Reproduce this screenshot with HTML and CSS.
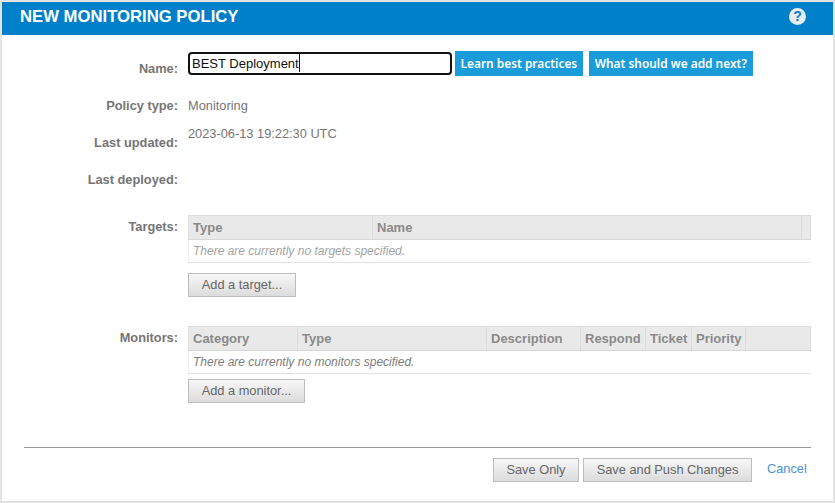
FILE: index.html
```html
<!DOCTYPE html>
<html lang="en">
<head>
<meta charset="utf-8">
<title>New Monitoring Policy</title>
<link rel="stylesheet" href="styles.css">
</head>
<body>
<div class="dialog">
  <header class="titlebar">
    <h1 class="title">NEW MONITORING POLICY</h1>
    <span class="help">?</span>
  </header>
  <main class="form">
    <div class="row row-name">
      <div class="label">Name:</div>
      <div class="value name-controls">
        <div class="textbox"><span class="typed">BEST Deployment</span></div>
        <a class="cta cta-first">Learn best practices</a>
        <a class="cta">What should we add next?</a>
      </div>
    </div>
    <div class="row row-type">
      <div class="label">Policy type:</div>
      <div class="value">Monitoring</div>
    </div>
    <div class="row row-updated">
      <div class="label">Last updated:</div>
      <div class="value">2023-06-13 19:22:30 UTC</div>
    </div>
    <div class="row row-deployed">
      <div class="label">Last deployed:</div>
      <div class="value"></div>
    </div>
    <div class="row row-targets">
      <div class="label">Targets:</div>
      <div class="value">
        <table class="grid">
          <colgroup><col class="t1"><col><col class="tail"></colgroup>
          <thead><tr><th>Type</th><th>Name</th><th></th></tr></thead>
          <tbody><tr><td colspan="3">There are currently no targets specified.</td></tr></tbody>
        </table>
        <button class="btn btn-target">Add a target...</button>
      </div>
    </div>
    <div class="row row-monitors">
      <div class="label">Monitors:</div>
      <div class="value">
        <table class="grid">
          <colgroup><col class="m1"><col class="m2"><col class="m3"><col class="m4"><col class="m5"><col class="m6"><col></colgroup>
          <thead><tr><th>Category</th><th>Type</th><th>Description</th><th>Respond</th><th>Ticket</th><th>Priority</th><th></th></tr></thead>
          <tbody><tr><td colspan="7">There are currently no monitors specified.</td></tr></tbody>
        </table>
        <button class="btn btn-monitor">Add a monitor...</button>
      </div>
    </div>
  </main>
  <footer class="footer">
    <button class="btn btn-save">Save Only</button>
    <button class="btn btn-push">Save and Push Changes</button>
    <a class="cancel">Cancel</a>
  </footer>
</div>
</body>
</html>
```
FILE: styles.css
```css
* { box-sizing: border-box; }
html, body { margin: 0; padding: 0; }
body {
  width: 835px;
  height: 503px;
  overflow: hidden;
  background: #fff;
  font-family: "Liberation Sans", Arial, sans-serif;
  font-size: 12.8px;
  color: #757575;
}
.dialog {
  width: 835px;
  height: 503px;
  border: 2px solid #e3e3e3;
  background: #fff;
  display: flex;
  flex-direction: column;
}
.titlebar {
  height: 33px;
  flex: none;
  background: #0080c8;
  display: flex;
  align-items: center;
  justify-content: space-between;
  padding: 0 27px 4px 18px;
}
.title {
  margin: 0;
  font-size: 16.7px;
  font-weight: 700;
  color: #fff;
}
.help {
  width: 17px;
  height: 17px;
  border-radius: 50%;
  background: #e8ecef;
  color: #0080c8;
  font-size: 14px;
  font-weight: 700;
  line-height: 17px;
  text-align: center;
}
.form { flex: 1; }
.row { display: flex; }
.label {
  width: 176px;
  flex: none;
  text-align: right;
  font-weight: 700;
  line-height: 15px;
}
.value {
  flex: none;
  width: 623px;
  margin-left: 10px;
  line-height: 15px;
}
.row-name { margin-top: 16px; height: 25px; }
.row-name .label { padding-top: 10px; }
.name-controls { display: flex; align-items: center; width: 640px; }
.textbox {
  width: 264px;
  height: 23px;
  border: 2px solid #111;
  border-radius: 4px;
  color: #111;
  padding-left: 2px;
  font-size: 13px;
  line-height: 19px;
}
.typed { display: inline-block; height: 18px; border-right: 1px solid #111; }
.cta {
  height: 25px;
  background: #1a9cdb;
  color: #fff;
  font-family: "Noto Sans", sans-serif;
  font-size: 11.9px;
  font-weight: 600;
  line-height: 25px;
  padding: 0 6px;
  margin-left: 6px;
}
.cta-first { margin-left: 3px; padding: 0 5.5px; }
.row-type { margin-top: 22px; height: 15px; }
.row-updated { margin-top: 13px; height: 30px; }
.row-updated .label { padding-top: 9px; }
.row-deployed { margin-top: 16px; height: 15px; }
.row-targets { margin-top: 28px; height: 82px; }
.row-targets .label { padding-top: 4px; }
.row-monitors { margin-top: 29px; height: 77px; }
.row-monitors .label { padding-top: 4px; }
.grid {
  width: 623px;
  border-collapse: collapse;
  table-layout: fixed;
}
.grid th {
  height: 24px;
  padding: 0 0 0 4px;
  background: #e9e9e9;
  border: 1px solid #dcdcdc;
  border-bottom-color: #d6d6d6;
  color: #8a8a8a;
  font-size: 13px;
  font-weight: 700;
  text-align: left;
  white-space: nowrap;
  overflow: hidden;
}
.grid td {
  height: 23px;
  padding: 0 0 0 4px;
  border-left: 1px solid #f2f2f2;
  border-bottom: 1px solid #e2e2e2;
  color: #a3a3a3;
  font-size: 12px;
  font-style: italic;
}
.row-monitors .grid td { color: #7d7d7d; }
.t1 { width: 184px; }
.tail { width: 9px; }
.m1 { width: 109px; }
.m2 { width: 189px; }
.m3 { width: 94px; }
.m4 { width: 65px; }
.m5 { width: 46px; }
.m6 { width: 54px; }
.btn {
  display: block;
  height: 24px;
  padding: 0;
  border: 1px solid #bdbdbd;
  background: linear-gradient(#f7f7f7, #dcdcdc);
  color: #666;
  font-family: "Liberation Sans", Arial, sans-serif;
  font-size: 12.8px;
  line-height: 22px;
  text-align: center;
}
.btn-target { width: 108px; margin-top: 10px; }
.btn-monitor { width: 117px; margin-top: 5px; }
.footer {
  margin: 0 22px;
  height: 54px;
  border-top: 1px solid #999;
  display: flex;
  align-items: flex-start;
  padding-top: 10px;
}
.btn-save { width: 86px; margin-left: 469px; }
.btn-push { width: 169px; margin-left: 4px; }
.cancel { margin-left: 15px; padding-top: 3px; color: #4a8fd6; line-height: 15px; }
```
